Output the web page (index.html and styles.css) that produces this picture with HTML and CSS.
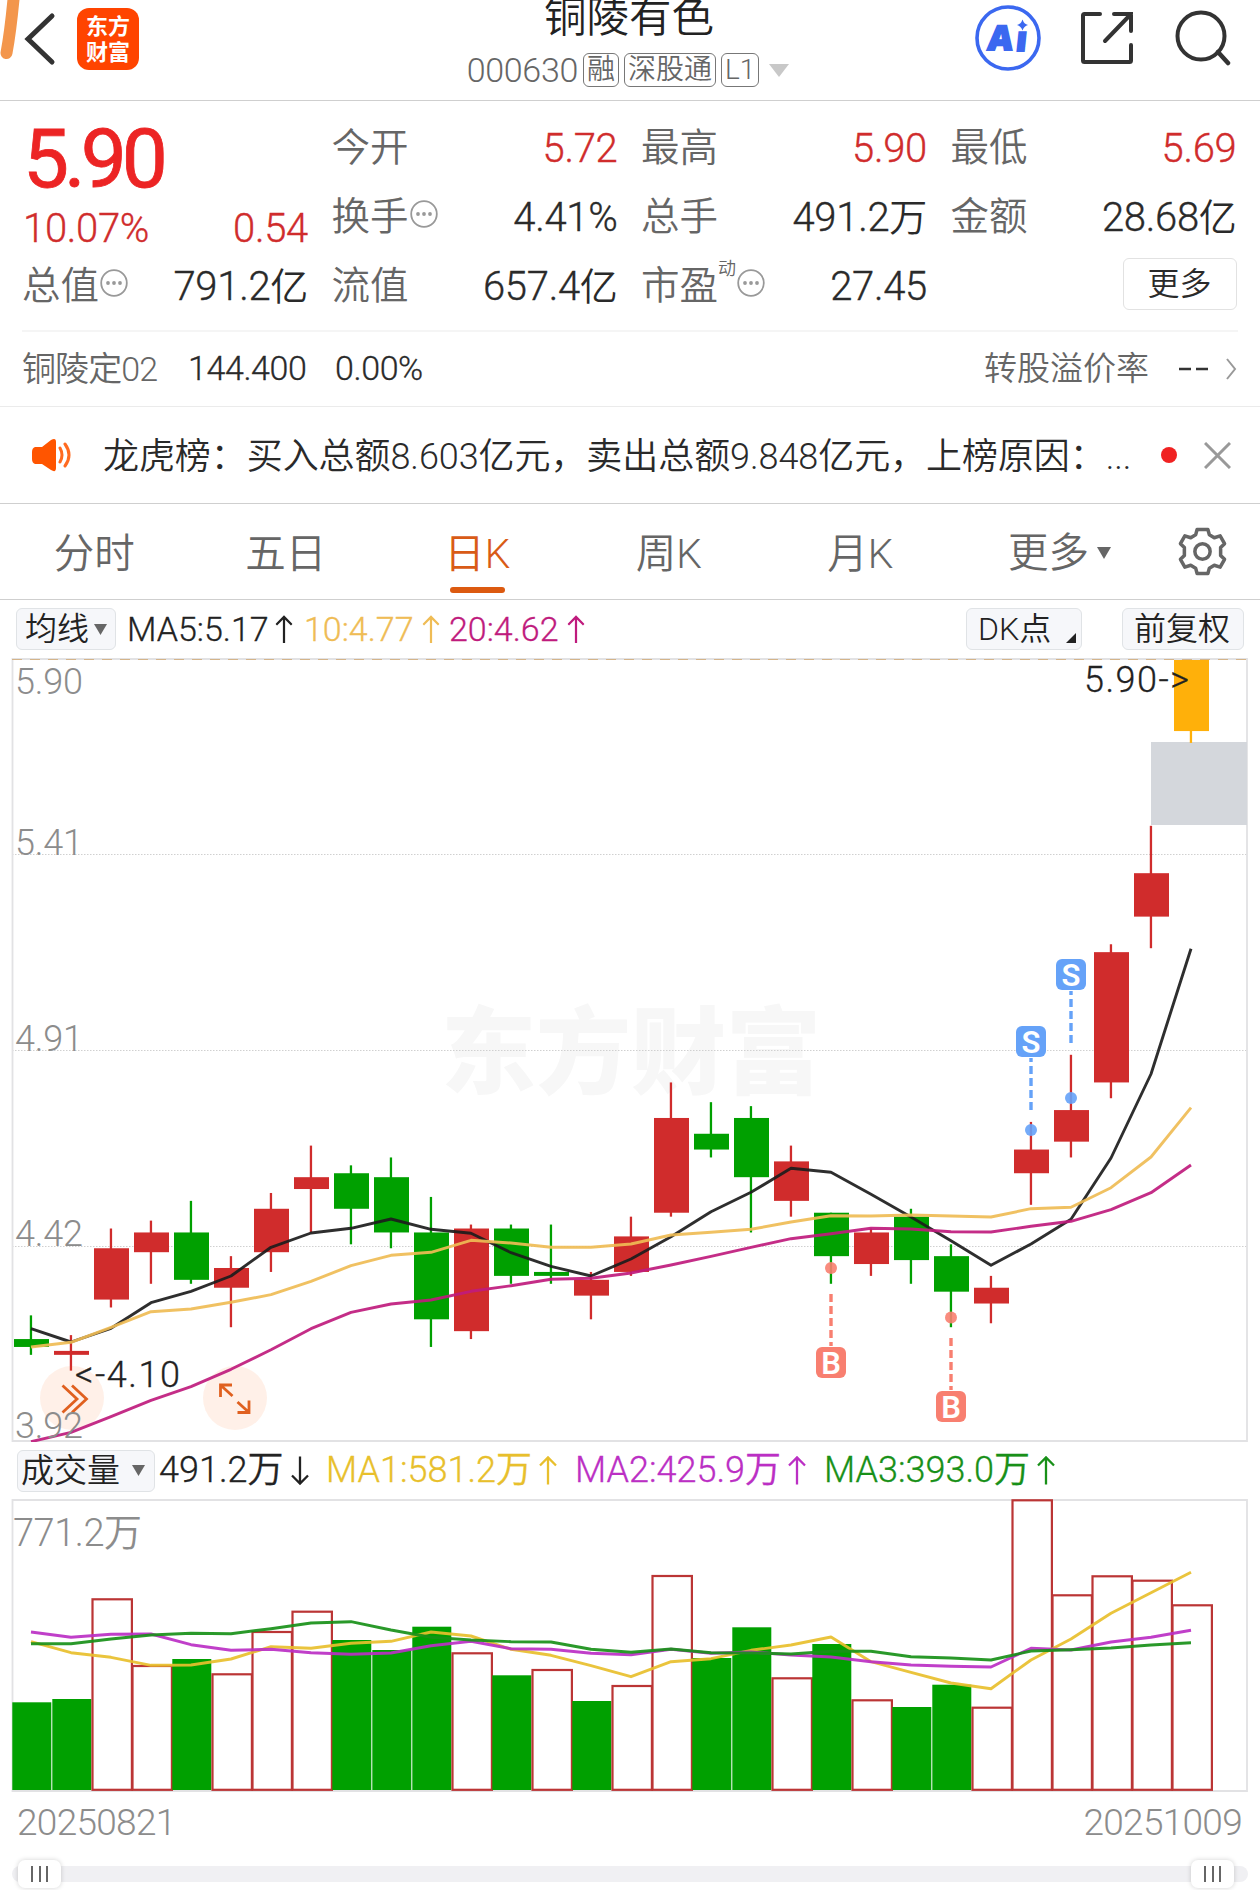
FILE: index.html
```html
<!DOCTYPE html>
<html lang="zh-CN">
<head>
  <meta charset="UTF-8" />
  <meta name="viewport" content="width=device-width, initial-scale=1.0" />
  <title>铜陵有色 000630</title>
  <link rel="stylesheet" href="styles.css">
</head>
<body>
  <header class="topbar">
    <div class="topbar-left">
      <svg class="back" width="60" height="76" viewBox="0 0 60 76">
        <path d="M14 -6 C12 16 10 34 6.5 53" fill="none" stroke="#f3964c" stroke-width="12" stroke-linecap="round"/>
        <path d="M52 16 L28 39 L52 62" fill="none" stroke="#333" stroke-width="5" stroke-linecap="round"/>
      </svg>
      <div class="logo">东方<br>财富</div>
    </div>
    <div class="stock-name">
      <h1>铜陵有色</h1>
      <div class="code-line">
        <span class="code">000630</span>
        <span class="tag">融</span>
        <span class="tag">深股通</span>
        <span class="tag">L1</span>
        <svg class="down" width="20" height="13" viewBox="0 0 20 13"><path d="M0 0H20L10 13Z" fill="#c8c8c8"/></svg>
      </div>
    </div>
    <div class="topbar-icons">
      <svg width="68" height="70" viewBox="0 0 68 70">
        <circle cx="34" cy="35" r="31" fill="none" stroke="#3b68f0" stroke-width="3.6"/>
        <text class="ai" transform="translate(13 47) skewX(-6)">A</text>
        <text class="ai" transform="translate(41 48) skewX(-6)">ı</text>
        <path d="M48.500 16.500Q50 21 54 22Q50 23 48.500 27.500Q47 23 43 22Q47 21 48.500 16.500Z" fill="#3b68f0"/>
      </svg>
      <svg width="56" height="56" viewBox="0 0 56 56">
        <path d="M21 4H5.500Q4 4 4 5.500V50.500Q4 52 5.500 52H50.500Q52 52 52 50.500V35M35 4H52V21M52 4L26 31" fill="none" stroke="#333" stroke-width="4" stroke-linecap="round"/>
      </svg>
      <svg width="56" height="56" viewBox="0 0 56 56">
        <circle cx="26" cy="26" r="23.500" fill="none" stroke="#333" stroke-width="4"/>
        <path d="M43 42L53 53" stroke="#333" stroke-width="4.500" stroke-linecap="round"/>
      </svg>
    </div>
  </header>

  <section class="quote">
    <div class="quote-col">
      <div class="price">5.90</div>
      <div class="cell change red"><span class="num">10.07%</span><span class="num">0.54</span></div>
      <div class="cell"><span class="label">总值<svg class="info" viewBox="0 0 28 28"><use href="#dots"/></svg></span><span class="num">791.2<i>亿</i></span></div>
    </div>
    <div class="quote-col">
      <div class="cell"><span class="label">今开</span><span class="num red">5.72</span></div>
      <div class="cell"><span class="label">换手<svg class="info" viewBox="0 0 28 28"><use href="#dots"/></svg></span><span class="num">4.41%</span></div>
      <div class="cell"><span class="label">流值</span><span class="num">657.4<i>亿</i></span></div>
    </div>
    <div class="quote-col">
      <div class="cell"><span class="label">最高</span><span class="num red">5.90</span></div>
      <div class="cell"><span class="label">总手</span><span class="num">491.2<i>万</i></span></div>
      <div class="cell"><span class="label">市盈<sup>动</sup><svg class="info" viewBox="0 0 28 28"><use href="#dots"/></svg></span><span class="num">27.45</span></div>
    </div>
    <div class="quote-col">
      <div class="cell"><span class="label">最低</span><span class="num red">5.69</span></div>
      <div class="cell"><span class="label">金额</span><span class="num">28.68<i>亿</i></span></div>
      <div class="cell more-cell"><button class="more">更多</button></div>
    </div>
  </section>

  <section class="bond">
    <span class="bond-name">铜陵定02</span>
    <span class="bond-price">144.400</span>
    <span class="bond-rate">0.00%</span>
    <span class="bond-label">转股溢价率</span>
    <svg class="dashes" width="29" height="4" viewBox="0 0 29 4"><path d="M0 2H12M17 2H29" stroke="#333" stroke-width="2.500"/></svg>
    <svg width="12" height="24" viewBox="0 0 12 24"><path d="M2 2L10 12L2 22" fill="none" stroke="#999" stroke-width="2"/></svg>
  </section>

  <section class="news">
    <svg width="42" height="34" viewBox="0 0 42 34">
      <path d="M3 9H10L19 2Q24 -1 24 4V30Q24 35 19 32L10 26H3Q0 25 0 21V14Q0 10 3 9Z" fill="#ff5500"/>
      <path d="M28 10Q32 17 28 24M33 6Q41 17 33 28" fill="none" stroke="#ff6a20" stroke-width="3" stroke-linecap="round"/>
    </svg>
    <p>龙虎榜：买入总额8.603亿元，卖出总额9.848亿元，上榜原因：...</p>
    <span class="red-dot"></span>
    <svg width="27" height="27" viewBox="0 0 27 27"><path d="M1 1L26 26M26 1L1 26" stroke="#999" stroke-width="3"/></svg>
  </section>

  <nav class="tabs">
    <a>分时</a>
    <a>五日</a>
    <a class="active">日K</a>
    <a>周K</a>
    <a>月K</a>
    <a class="tab-more">更多<svg width="14" height="12" viewBox="0 0 14 12"><path d="M0 0H14L7 12Z" fill="#666"/></svg></a>
    <div class="settings">
      <svg width="49" height="49" viewBox="-25 -25 50 50" fill="none" stroke="#666" stroke-width="3.600">
        <path d="M-5.500 -22.500H5.500L7 -17L12 -14L18 -16L22.500 -8L18.500 -4V4L22.500 8L18 16L12 14L7 17L5.500 22.500H-5.500L-7 17L-12 14L-18 16L-22.500 8L-18.500 4V-4L-22.500 -8L-18 -16L-12 -14L-7 -17Z" stroke-linejoin="round"/>
        <circle r="7.800"/>
      </svg>
    </div>
  </nav>

  <div class="legend ma-legend">
    <button class="chip">均线<svg width="13" height="11" viewBox="0 0 13 11"><path d="M0 0H13L6.500 11Z" fill="#666"/></svg></button>
    <span class="ma5">MA5:5.17<svg class="arrow" viewBox="0 0 18 30"><use href="#up"/></svg></span>
    <span class="ma10">10:4.77<svg class="arrow" viewBox="0 0 18 30"><use href="#up"/></svg></span>
    <span class="ma20">20:4.62<svg class="arrow" viewBox="0 0 18 30"><use href="#up"/></svg></span>
    <button class="chip dk">DK点<svg width="10" height="10" viewBox="0 0 10 10"><path d="M10 0V10H0Z" fill="#222"/></svg></button>
    <button class="chip adjust">前复权</button>
  </div>

  <svg id="kline" class="chart" width="1260" height="784" viewBox="0 658 1260 784"></svg>

  <div class="legend vol-legend">
    <button class="chip">成交量<svg width="13" height="11" viewBox="0 0 13 11"><path d="M0 0H13L6.500 11Z" fill="#666"/></svg></button>
    <span class="vol">491.2万<svg class="arrow" viewBox="0 0 18 30"><use href="#down"/></svg></span>
    <span class="vma1">MA1:581.2万<svg class="arrow" viewBox="0 0 18 30"><use href="#up"/></svg></span>
    <span class="vma2">MA2:425.9万<svg class="arrow" viewBox="0 0 18 30"><use href="#up"/></svg></span>
    <span class="vma3">MA3:393.0万<svg class="arrow" viewBox="0 0 18 30"><use href="#up"/></svg></span>
  </div>

  <svg id="volume" class="chart" width="1260" height="294" viewBox="0 1499 1260 294"></svg>

  <div class="dates"><span>20250821</span><span>20251009</span></div>

  <div class="slider">
    <div class="handle"><b></b><b></b><b></b></div>
    <div class="handle"><b></b><b></b><b></b></div>
  </div>

  <svg width="0" height="0" class="defs">
    <symbol id="dots" viewBox="0 0 28 28">
      <circle cx="14" cy="14" r="12.800" fill="none" stroke="#999" stroke-width="1.800"/>
      <circle cx="8" cy="14" r="1.900" fill="#999"/><circle cx="14" cy="14" r="1.900" fill="#999"/><circle cx="20" cy="14" r="1.900" fill="#999"/>
    </symbol>
    <symbol id="up" viewBox="0 0 18 30"><path d="M9 29V2M1 10L9 2L17 10" fill="none" stroke="currentColor" stroke-width="2.300"/></symbol>
    <symbol id="down" viewBox="0 0 18 30"><path d="M9 1V28M1 20L9 28L17 20" fill="none" stroke="currentColor" stroke-width="2.300"/></symbol>
  </svg>

  <script src="script.js"></script>
</body>
</html>
```

FILE: styles.css
```css
body {
  margin: 0;
  width: 1260px;
  height: 1890px;
  overflow: hidden;
  background: #fff;
  color: #2a2a2a;
  font-family: Roboto, "Noto Sans CJK SC", sans-serif;
  font-weight: 350;
}

svg {
  display: block;
  flex-shrink: 0;
}

button {
  font-family: inherit;
  font-weight: inherit;
  color: inherit;
}

.red {
  color: #d02c2c;
}

/* top bar */
.topbar {
  display: grid;
  grid-template-columns: 360px 1fr 360px;
  height: 100px;
  border-bottom: 1px solid #cfcfcf;
}

.topbar-left {
  display: flex;
}

.logo {
  width: 62px;
  height: 56px;
  padding-top: 6px;
  margin: 8px 0 0 17px;
  border-radius: 12px;
  background: #ff4400;
  color: #fff;
  font-size: 22px;
  font-weight: 700;
  line-height: 26px;
  text-align: center;
}

.stock-name {
  display: flex;
  flex-direction: column;
  align-items: center;
}

.stock-name h1 {
  margin: -4px 2px 3px 0;
  font-size: 42.5px;
  line-height: 44px;
  font-weight: inherit;
  color: #222;
}

.code-line {
  display: flex;
  align-items: center;
  gap: 5px;
  height: 54px;
  margin-left: -4px;
  color: #666;
}

.code {
  font-size: 34px;
  letter-spacing: -0.3px;
}

.tag {
  box-sizing: border-box;
  height: 34px;
  padding: 0 3px;
  border: 1.5px solid #777;
  border-radius: 6px;
  font-size: 28px;
  line-height: 32px;
}

.down {
  margin-left: 5px;
}

.topbar-icons {
  display: flex;
  align-items: flex-start;
  padding-top: 3px;
  padding-left: 74px;
}

.topbar-icons svg + svg {
  margin: 7px 0 0 37px;
}

.topbar-icons svg:last-child {
  margin-left: 40px;
}

.ai {
  font-family: "Open Sans", Roboto, sans-serif;
  font-size: 34px;
  font-weight: 800;
  fill: #3b68f0;
  stroke: #3b68f0;
  stroke-width: 1.8px;
}

/* quote grid */
.quote {
  display: grid;
  grid-template-columns: repeat(4, 285px);
  column-gap: 24.5px;
  margin: 0 22px;
  padding: 13px 1px 9px;
  border-bottom: 2px solid #f5f5f5;
}

.price {
  height: 90px;
  line-height: 91px;
  font-size: 82px;
  font-weight: 450;
  letter-spacing: -5px;
  color: #ec2424;
  -webkit-text-stroke: 0.8px #ec2424;
}

.cell {
  display: flex;
  align-items: center;
  justify-content: space-between;
  height: 69px;
}

.change {
  height: 46px;
  padding-top: 2px;
}

.label {
  display: flex;
  align-items: center;
  margin: -2px 0 0 -1px;
  font-size: 38.5px;
  line-height: 50px;
  color: #666;
}

.num {
  font-size: 40px;
  line-height: 50px;
  letter-spacing: -0.3px;
  -webkit-text-stroke: 0.35px currentColor;
}

.num i {
  font-style: normal;
  font-size: 38px;
  -webkit-text-stroke: 0;
}

.label sup {
  align-self: flex-start;
  margin-top: -1px;
  font-size: 18px;
  line-height: 18px;
}

.info {
  width: 28px;
  height: 28px;
  margin: -5px 0 0 1px;
}

.more-cell {
  justify-content: flex-end;
}

.more {
  width: 114px;
  height: 52px;
  padding: 0;
  margin-top: -5px;
  border: 1.5px solid #e2e2e2;
  border-radius: 6px;
  background: #fff;
  font-size: 32px;
  line-height: 44px;
}

/* bond line */
.bond {
  display: flex;
  align-items: center;
  box-sizing: border-box;
  height: 75px;
  padding: 0 23px 0 22px;
  border-bottom: 1px solid #ebebeb;
  font-size: 34px;
  letter-spacing: -0.4px;
}

.bond span {
  margin-top: -3px;
}

.bond .bond-name {
  width: 166px;
  margin-top: -5px;
  color: #666;
  letter-spacing: -0.9px;
}

.bond-price {
  width: 147px;
}

.bond-price,
.bond-rate {
  -webkit-text-stroke: 0.3px currentColor;
}

.bond .bond-label {
  margin-top: -6px;
  margin-left: auto;
  font-size: 33px;
  letter-spacing: 0;
  color: #666;
}

.dashes {
  margin: 0 17px 0 30px;
}

/* news line */
.news {
  display: flex;
  align-items: center;
  height: 96px;
  padding: 0 29px 0 32px;
  border-bottom: 1px solid #cfcfcf;
}

.news p {
  flex: 1;
  margin: -5px 0 0 29px;
  font-size: 36px;
  letter-spacing: -0.07px;
  white-space: nowrap;
}

.red-dot {
  width: 16px;
  height: 16px;
  margin-right: 27px;
  border-radius: 50%;
  background: #f02222;
}

/* period tabs */
.tabs {
  display: flex;
  height: 95px;
  border-bottom: 1px solid #cfcfcf;
}

.tabs a {
  position: relative;
  width: 191.5px;
  font-size: 40.5px;
  line-height: 100px;
  text-align: center;
  text-indent: -3px;
  color: #666;
}

.tabs .active {
  color: #d95b16;
}

.tabs .active::after {
  content: "";
  position: absolute;
  left: 67px;
  bottom: 6px;
  width: 55px;
  height: 6px;
  border-radius: 3px;
  background: #dc5a10;
}

.tabs .tab-more {
  display: flex;
  align-items: center;
  justify-content: center;
  gap: 8px;
  padding: 2px 0 0 9px;
  width: 189px;
  height: 94px;
}

.settings {
  display: flex;
  align-items: center;
  padding-left: 22px;
}

/* indicator legends */
.legend {
  display: flex;
  align-items: center;
  white-space: nowrap;
}

.legend span {
  display: flex;
  align-items: center;
  -webkit-text-stroke: 0.3px currentColor;
}

.ma-legend {
  height: 58px;
  padding: 0 16px;
  font-size: 34px;
}

.vol-legend {
  height: 57px;
  padding: 0 17px;
  font-size: 36px;
}

.vol-legend span {
  height: 40px;
  line-height: 40px;
  margin-top: -1px;
}

.chip {
  display: flex;
  align-items: center;
  box-sizing: border-box;
  height: 42px;
  padding: 0 8px;
  border: 1.5px solid #e0e3e6;
  border-radius: 6px;
  background: #f6f7fa;
  color: #222;
  font-size: 32px;
  line-height: 38px;
}

.chip svg {
  margin-left: 5px;
}

.ma-legend .chip:first-child {
  width: 100px;
}

.vol-legend .chip {
  width: 138px;
  padding: 0 3px;
  font-size: 33px;
}

.vol-legend .chip svg {
  margin-left: 12px;
}

.arrow {
  width: 18px;
  height: 29px;
  margin-left: 8px;
}

.ma-legend .ma5 .arrow {
  margin-left: 6px;
}

.vol-legend .arrow {
  height: 31px;
  margin: 0 0 0 7px;
}

.ma5 {
  width: 177px;
  margin-left: 11px;
  color: #222;
}

.ma10 {
  width: 145px;
  color: #efbc55;
}

.ma20 {
  color: #bf1b7d;
}

.legend .dk {
  width: 116px;
  margin-left: auto;
  padding: 0 5px 0 11px;
}

.dk svg {
  align-self: flex-end;
  margin: 0 0 6px auto;
}

.legend .adjust {
  width: 122px;
  margin-left: 40px;
  padding: 0 11px;
}

.vol {
  width: 167px;
  margin-left: 4px;
  color: #222;
}

.vma1,
.vma2 {
  width: 249px;
  color: #e8bf2c;
}

.vma2 {
  color: #bb2fc4;
}

.vma3 {
  color: #189018;
}

/* charts */
.axis {
  font-size: 36px;
  fill: #8c8c8c;
}

.axis.large {
  font-size: 38px;
}

.note {
  font-size: 36px;
  fill: #222;
  stroke: #222;
  stroke-width: 0.3px;
}

.watermark {
  font-size: 95px;
  font-weight: 900;
  fill: #f7f7f7;
}

.mark {
  font-size: 31px;
  font-weight: 600;
  fill: #fff;
  text-anchor: middle;
}

.dates {
  display: flex;
  justify-content: space-between;
  height: 56px;
  padding: 2px 18px 0 17px;
  font-size: 37px;
  line-height: 56px;
  color: #8c8c8c;
}

.dates span {
  letter-spacing: -0.7px;
}

.slider {
  display: flex;
  align-items: center;
  justify-content: space-between;
  height: 16px;
  margin: 15px 12px 0;
  padding: 0 14px 0 6px;
  border-radius: 8px;
  background: #f0f0f3;
}

.handle {
  display: flex;
  align-items: center;
  justify-content: center;
  gap: 5.5px;
  width: 43px;
  height: 28px;
  border-radius: 7px;
  background: #fff;
  box-shadow: 0 0 5px rgba(0, 0, 0, 0.18);
}

.handle b {
  width: 2px;
  height: 16px;
  background: #666;
}
```

FILE: script.js
```js
// [up?, high, body top, body bottom, low]
const candles = [
  [0, 4.24, 4.18, 4.16, 4.14], [1, 4.19, 4.15, 4.14, 4.10], [1, 4.46, 4.41, 4.28, 4.26],
  [1, 4.48, 4.45, 4.40, 4.32], [0, 4.53, 4.45, 4.33, 4.32], [1, 4.39, 4.36, 4.31, 4.21],
  [1, 4.55, 4.51, 4.40, 4.35], [1, 4.67, 4.59, 4.56, 4.45], [0, 4.62, 4.60, 4.51, 4.42],
  [0, 4.64, 4.59, 4.45, 4.41], [0, 4.54, 4.45, 4.23, 4.16], [1, 4.47, 4.46, 4.20, 4.18],
  [0, 4.47, 4.46, 4.34, 4.32], [0, 4.47, 4.35, 4.34, 4.32], [1, 4.35, 4.33, 4.29, 4.23],
  [1, 4.49, 4.44, 4.35, 4.34], [1, 4.83, 4.74, 4.50, 4.49], [0, 4.78, 4.70, 4.66, 4.64],
  [0, 4.77, 4.74, 4.59, 4.45], [1, 4.67, 4.63, 4.53, 4.49], [0, 4.50, 4.50, 4.39, 4.32],
  [1, 4.46, 4.45, 4.37, 4.34], [0, 4.51, 4.49, 4.38, 4.32], [0, 4.42, 4.39, 4.30, 4.21],
  [1, 4.34, 4.31, 4.27, 4.22], [1, 4.73, 4.66, 4.60, 4.52], [1, 4.90, 4.76, 4.68, 4.64],
  [1, 5.18, 5.16, 4.83, 4.79], [1, 5.48, 5.36, 5.25, 5.17], [2, 5.90, 5.90, 5.72, 5.69]
];

const ma5 = [1328.7, 1342, 1328.3, 1302.7, 1291.3, 1276, 1247.3, 1233, 1228.3, 1219, 1229.3, 1233.3, 1252.7, 1266.3, 1276, 1259, 1236.7, 1211.7, 1192.3, 1168.3, 1172.3, 1194.3, 1217, 1240.7, 1265.3, 1244, 1219.3, 1158, 1074, 948.7];
const ma10 = [1347, 1342.3, 1327.3, 1311.7, 1309, 1302.3, 1294.7, 1281.3, 1265.7, 1255.3, 1252.3, 1240.3, 1243, 1247.3, 1247.3, 1244, 1235, 1232.3, 1229.3, 1222, 1215.7, 1216, 1215, 1216, 1217, 1208.7, 1207.3, 1187.7, 1157, 1107.7];
const ma20 = [1441.7, 1432.3, 1416.7, 1400.3, 1386.7, 1369.3, 1349.7, 1328.7, 1312.3, 1304, 1300, 1291.3, 1285.7, 1279.3, 1278.3, 1273, 1265, 1256.3, 1247.3, 1238.7, 1233.7, 1228.3, 1229, 1231.7, 1232, 1226.3, 1221.3, 1209.7, 1192.7, 1165];

const volTops = [1702.3, 1699, 1599.3, 1666, 1659, 1674.3, 1632, 1611.7, 1640, 1650, 1626.7, 1653.3, 1675.3, 1670, 1701, 1686, 1576, 1658, 1627.3, 1678.3, 1644, 1700.3, 1707, 1684.7, 1707.7, 1500.3, 1595.3, 1576.3, 1580.7, 1605.3];
const volGreen = [0, 1, 4, 8, 9, 10, 12, 14, 17, 18, 20, 22, 23];
const vma1 = [1641.7, 1652.7, 1657.3, 1665.3, 1665, 1659, 1646.7, 1648.3, 1643.3, 1641.3, 1632, 1636, 1649.3, 1655.3, 1665.7, 1676.7, 1661.7, 1658.7, 1650.3, 1645, 1637, 1661.7, 1672.3, 1683, 1688.7, 1660, 1639, 1613.3, 1592.7, 1572.3];
const vma2 = [1632, 1637.3, 1634.3, 1634, 1644.7, 1650.3, 1649.3, 1652.7, 1654.3, 1653, 1645.7, 1641.3, 1648.7, 1649.3, 1653.3, 1654.7, 1649.3, 1653.3, 1652, 1655, 1657, 1661.7, 1665, 1666.3, 1667, 1648.3, 1650, 1642, 1637.3, 1630.3];
const vma3 = [1643.7, 1643.7, 1639, 1635, 1633.3, 1633.7, 1628.7, 1623, 1621.7, 1630, 1637.3, 1640, 1641.7, 1642, 1649.3, 1652.3, 1649, 1652.7, 1653, 1654, 1651.3, 1651.3, 1656.7, 1658, 1660, 1651, 1649.7, 1648, 1645, 1642.7];

const colors = ["#00a000", "#d02c2c", "#ffb00a"];
const step = 40;

function priceY(p) {
  return 660 + (5.90 - p) * 394.8;
}

function rect(x, y, w, h, fill, extra = "") {
  return `<rect x="${x}" y="${y}" width="${w}" height="${h}" fill="${fill}" ${extra}/>`;
}

function line(points, color) {
  const pts = points.map((y, i) => `${31 + i * step},${y}`).join(" ");
  return `<polyline points="${pts}" fill="none" stroke="${color}" stroke-width="2.9" stroke-opacity="0.92" stroke-linejoin="round"/>`;
}

// buy / sell marker: letter box, dashed stem, dot on the candle
function marker(letter, i, boxY, from, to, dotY) {
  const x = 31 + i * step;
  const color = letter === "S" ? "#65a2f8" : "#f87f70";
  const offset = letter === "S" ? 4 : 0;
  return `<path d="M${x} ${from}V${to}" stroke="${color}" stroke-width="3.4" stroke-dasharray="8 4" stroke-dashoffset="${offset}"/>`
    + `<circle cx="${x}" cy="${dotY}" r="6" fill="${color}" fill-opacity="0.9"/>`
    + rect(x - 15, boxY, 30, 31, color, 'rx="6"')
    + `<text class="mark" x="${x}" y="${boxY + 26.5}">${letter}</text>`;
}

function drawKline() {
  let s = `<text class="watermark" x="441" y="1087" textLength="380">东方财富</text>`;
  [854.5, 1050.5, 1246.5].forEach(y => {
    s += `<path d="M12 ${y}H1247" stroke="#d0d0d0" stroke-dasharray="1.500 1.500"/>`;
  });
  s += `<path d="M12.500 659V1441H1247V659Z" fill="none" stroke="#e2e2e4" stroke-width="1.800"/>`;
  s += `<path d="M12 659.500H1247" stroke="#d4b48a" stroke-width="1.200" stroke-dasharray="10 8"/>`;
  s += rect(1151, 742, 96, 83, "#d4d7dc");

  candles.forEach(([type, high, top, bottom, low], i) => {
    const x = 14 + i * step;
    s += rect(x + 15.8, priceY(high), 2.3, priceY(low) - priceY(high), colors[type]);
    s += rect(x, priceY(top), 35, priceY(bottom) - priceY(top), colors[type]);
  });

  s += `<circle cx="72" cy="1398" r="32" fill="#ff6a20" fill-opacity="0.1"/><circle cx="235" cy="1398" r="32" fill="#ff6a20" fill-opacity="0.1"/>`;
  s += `<path d="M62.500 1385.500L77 1399L62.500 1412.500M72 1385.500L86.500 1399L72 1412.500M232 1385H220.500V1397M221 1385.500L232.500 1396M237.500 1412.500H249V1400.500M248.500 1412L237.500 1402" fill="none" stroke="#e0601f" stroke-width="2.800"/>`;

  s += line(ma5, "#1c1c1c") + line(ma10, "#efbc55") + line(ma20, "#bf1b7d");

  s += marker("S", 25, 1026, 1058, 1110, 1130);
  s += marker("S", 26, 959, 991, 1043, 1098);
  s += marker("B", 20, 1347, 1294, 1346, 1268);
  s += marker("B", 23, 1391, 1338, 1390, 1317.5);

  [["5.90", 694], ["5.41", 855], ["4.91", 1051], ["4.42", 1246], ["3.92", 1438]].forEach(([t, y]) => {
    s += `<text class="axis" x="15" y="${y}" textLength="68">${t}</text>`;
  });
  s += `<text class="note" x="75" y="1386.500" textLength="105">&lt;-4.10</text>`;
  s += `<text class="note" x="1084" y="691.500" textLength="105">5.90-&gt;</text>`;
  document.getElementById("kline").innerHTML = s;
}

function drawVolume() {
  let s = `<path d="M12.500 1500V1791H1247V1500Z" fill="none" stroke="#e2e2e4" stroke-width="1.800"/>`;
  volTops.forEach((y, i) => {
    const x = 12.3 + i * step;
    if (volGreen.includes(i)) {
      s += rect(x, y, 39, 1790 - y, "#00a000");
    } else {
      s += rect(x + 0.2, y, 39.4, 1789.8 - y, "none", 'stroke="#bb3535" stroke-width="2.2"');
    }
  });
  s += line(vma1, "#e8bf2c") + line(vma2, "#bb2fc4") + line(vma3, "#189018");
  s += `<text class="axis large" x="13" y="1546" textLength="129">771.2万</text>`;
  document.getElementById("volume").innerHTML = s;
}

drawKline();
drawVolume();
```
